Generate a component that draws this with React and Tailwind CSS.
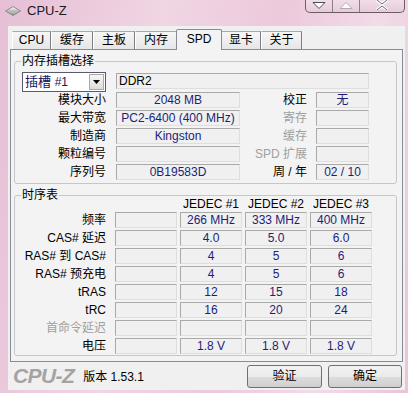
const FONT = "font-['Liberation_Sans','Noto_Sans_CJK_SC',sans-serif]";

function Field({ className = "", children }) {
  return (
    <div
      className={`h-[16px] border border-t-[#a9a9a9] border-l-[#a9a9a9] border-b-[#dedede] border-r-[#dedede] bg-[#f0f0f0] text-center text-[12px] leading-[14px] text-[#1e1e78] whitespace-nowrap overflow-hidden ${className}`}
    >
      {children}
    </div>
  );
}

function Tab({ label, w, active }) {
  if (active) {
    return (
      <div
        className={`${w} h-[21px] relative top-[1px] z-10 -mx-[1px] border border-b-0 border-[#898c95] bg-[#f3f3f3] text-center text-[12px] leading-[16px] pt-[1px] rounded-t-[2px]`}
      >
        {label}
      </div>
    );
  }
  return (
    <div
      className={`${w} h-[18px] border-t border-l border-r border-t-[#a5a8ae] border-l-[#ffffff] border-r-[#7c7f86] bg-[linear-gradient(#f6f6f6,#e6e6e6)] text-center text-[12px] leading-[17px]`}
    >
      {label}
    </div>
  );
}

function GroupTitle({ children }) {
  return (
    <div className="-mt-[8px] ml-[6px] w-fit h-[14px] px-[1px] bg-[#f3f3f3] text-[12px] leading-[14px]">
      {children}
    </div>
  );
}

const slotRows = [
  ["模块大小", "2048 MB", "校正", "无", false],
  ["最大带宽", "PC2-6400 (400 MHz)", "寄存", "", true],
  ["制造商", "Kingston", "缓存", "", true],
  ["颗粒编号", "", "SPD 扩展", "", true],
  ["序列号", "0B19583D", "周 / 年", "02 / 10", false],
];

const timingRows = [
  ["频率", ["266 MHz", "333 MHz", "400 MHz"], false],
  ["CAS# 延迟", ["4.0", "5.0", "6.0"], false],
  ["RAS# 到 CAS#", ["4", "5", "6"], false],
  ["RAS# 预充电", ["4", "5", "6"], false],
  ["tRAS", ["12", "15", "18"], false],
  ["tRC", ["16", "20", "24"], false],
  ["首命令延迟", ["", "", ""], true],
  ["电压", ["1.8 V", "1.8 V", "1.8 V"], false],
];

export default function App() {
  return (
    <div
      className={`${FONT} w-[408px] h-[393px] overflow-hidden flex flex-col text-black bg-[linear-gradient(100deg,#e6bfd5_0%,#f0d5e3_35%,#ecc9dc_60%,#f3dbe8_80%,#e9c4d8_100%)]`}
    >
      {/* title bar */}
      <div className="h-[26px] flex items-start">
        <div className="pl-[5px] pt-[5px] h-[17px] flex items-center gap-[6px]">
          <svg width="16" height="10" viewBox="0 0 16 10">
            <defs>
              <linearGradient id="gem" x1="0" y1="0" x2="0" y2="1">
                <stop offset="0" stopColor="#f4f4f4" />
                <stop offset="0.5" stopColor="#c9c9c9" />
                <stop offset="1" stopColor="#8d8d8d" />
              </linearGradient>
            </defs>
            <path d="M8 0.5 L15.5 5 L8 9.5 L0.5 5 Z" fill="url(#gem)" stroke="#7a7a7a" strokeWidth="0.8" />
            <path d="M0.5 5 L15.5 5" stroke="#a0a0a0" strokeWidth="0.6" />
          </svg>
          <span className="text-[13px] leading-[14px] text-[#1a1a1a]">CPU-Z</span>
        </div>
        <div className="ml-auto mr-[3px] h-[13px] flex border border-t-0 border-[#6e5b68] rounded-b-[5px] overflow-hidden bg-[linear-gradient(#f1dde8,#e6cbd9)]">
          <div className="w-[27px] flex items-start justify-center border-r border-[#8f7d89] pt-[2px]">
            <svg width="14" height="7" viewBox="0 0 14 7">
              <path d="M1 0.5 L13 0.5 L7 6.5 Z" fill="#ffffff" stroke="#4d4d4d" strokeWidth="1" />
            </svg>
          </div>
          <div className="w-[27px] flex items-start justify-center border-r border-[#8f7d89] pt-[2px]">
            <svg width="14" height="7" viewBox="0 0 14 7">
              <path d="M1 6.5 L13 6.5 L7 0.5 Z" fill="#ffffff" stroke="#b9a7b2" strokeWidth="1" />
            </svg>
          </div>
          <div className="w-[44px] flex items-start justify-center">
            <svg width="14" height="10" viewBox="0 0 14 10">
              <path d="M2 0 L7 4 L12 0 M2 10 L7 6 L12 10" fill="none" stroke="#ffffff" strokeWidth="3" />
              <path d="M2 0 L7 4 L12 0 M2 10 L7 6 L12 10" fill="none" stroke="#6a6a6a" strokeWidth="1" />
            </svg>
          </div>
        </div>
      </div>

      {/* client area */}
      <div className="ml-[8px] w-[397px] h-[364px] bg-[#f0f0f0] flex flex-col">
        {/* tabs */}
        <div className="mt-[3px] h-[20px] pl-[4px] flex items-end">
          <Tab label="CPU" w="w-[39px]" />
          <Tab label="缓存" w="w-[42px]" />
          <Tab label="主板" w="w-[42px]" />
          <Tab label="内存" w="w-[42px]" />
          <Tab label="SPD" w="w-[46px]" active />
          <Tab label="显卡" w="w-[40px]" />
          <Tab label="关于" w="w-[41px]" />
        </div>

        {/* panel */}
        <div className="ml-[2px] w-[393px] h-[313px] border border-[#898c95] bg-[#f3f3f3] pl-[3px] pr-[5px] pt-[11px] flex flex-col">
          {/* slot group */}
          <div className="h-[123px] border border-[#c3c7cb] rounded-[3px] flex flex-col">
            <GroupTitle>内存插槽选择</GroupTitle>
            <div className="mt-[4px] h-[20px] flex items-start">
              <div className="ml-[7px] w-[84px] h-[20px] border border-[#5a5a6e] bg-white flex items-center">
                <span className="pl-[2px] text-[13px] leading-[16px] text-[#15155c]">
                  插槽 <span className="text-[12px]">#1</span>
                </span>
                <div className="ml-auto mr-[1px] w-[15px] h-[16px] border border-[#a9a9a9] bg-[linear-gradient(#f6f6f6,#dcdcdc)] flex items-center justify-center">
                  <svg width="7" height="4" viewBox="0 0 7 4">
                    <path d="M0 0 L7 0 L3.5 4 Z" fill="#000" />
                  </svg>
                </div>
              </div>
              <Field className="ml-[10px] mt-[1px] w-[253px] !text-left pl-[2px] !text-[#000000]">DDR2</Field>
            </div>
            <div className="flex flex-col gap-[2px]">
              {slotRows.map(([l, v, rl, rv, dis]) => (
                <div key={l} className="h-[16px] flex items-center">
                  <div className="w-[91px] text-right text-[12px] leading-[16px]">{l}</div>
                  <Field className="ml-[10px] w-[124px]">{v}</Field>
                  <div
                    className={`ml-[10px] w-[57px] text-right text-[12px] leading-[16px] whitespace-nowrap ${dis ? "text-[#a0a0a0]" : "text-black"}`}
                  >
                    {rl}
                  </div>
                  <Field className="ml-[9px] w-[53px]">{rv}</Field>
                </div>
              ))}
            </div>
          </div>

          {/* timings group */}
          <div className="mt-[11px] h-[161px] border border-[#c3c7cb] rounded-[3px] flex flex-col">
            <GroupTitle>时序表</GroupTitle>
            <div className="-mt-[4px] h-[12px] flex text-[12px] leading-[12px]">
              <div className="w-[91px]" />
              <div className="ml-[9px] w-[62px]" />
              <div className="ml-[3px] w-[62px] text-center">JEDEC #1</div>
              <div className="ml-[3px] w-[62px] text-center">JEDEC #2</div>
              <div className="ml-[3px] w-[62px] text-center">JEDEC #3</div>
            </div>
            <div className="mt-[2px] flex flex-col gap-[2px]">
              {timingRows.map(([l, vals, dis]) => (
                <div key={l} className="h-[16px] flex items-center">
                  <div
                    className={`w-[91px] text-right text-[12px] leading-[16px] whitespace-nowrap ${dis ? "text-[#a0a0a0]" : "text-black"}`}
                  >
                    {l}
                  </div>
                  <Field className="ml-[9px] w-[62px]" />
                  {vals.map((v, i) => (
                    <Field key={i} className="ml-[3px] w-[62px]">
                      {v}
                    </Field>
                  ))}
                </div>
              ))}
            </div>
          </div>
        </div>

        {/* footer */}
        <div className="h-[28px] flex items-center pl-[5px] pr-[3px]">
          <span className="text-[21px] leading-[22px] font-bold italic text-[#a3a3a3] tracking-[-0.6px]">CPU-Z</span>
          <span className="ml-[9px] text-[12px] leading-[14px] mt-[2px]">版本 1.53.1</span>
          <div className="ml-auto flex gap-[6px]">
            <button className="w-[75px] h-[23px] border border-[#707070] rounded-[3px] bg-[linear-gradient(#f2f2f2_0%,#ebebeb_50%,#dddddd_51%,#cfcfcf_100%)] text-[12px] leading-[20px]">
              验证
            </button>
            <button className="w-[74px] h-[23px] border border-[#707070] rounded-[3px] bg-[linear-gradient(#f2f2f2_0%,#ebebeb_50%,#dddddd_51%,#cfcfcf_100%)] text-[12px] leading-[20px]">
              确定
            </button>
          </div>
        </div>
      </div>
    </div>
  );
}
